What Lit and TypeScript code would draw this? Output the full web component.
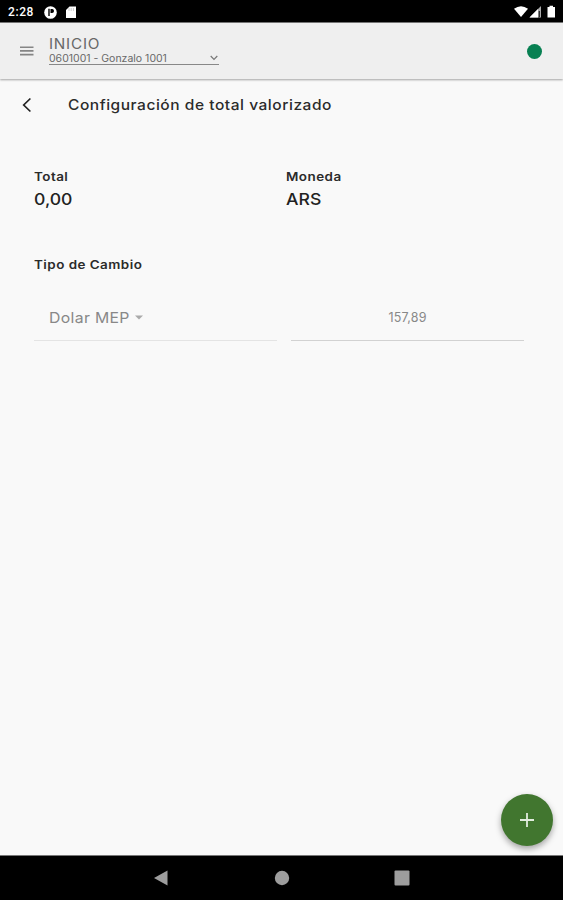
import { LitElement, html, css } from "lit";
import { customElement } from "lit/decorators.js";

@customElement("app-root")
export class AppRoot extends LitElement {
  static styles = css`
    :host {
      display: flex;
      flex-direction: column;
      height: 900px;
      background: #f9f9f9;
      color: #2b2b2b;
      font-family: Inter, "Noto Sans", sans-serif;
      overflow: hidden;
      white-space: nowrap;
    }
    * { box-sizing: border-box; }
    svg { display: block; flex: none; }
    .status {
      flex: none;
      height: 23px;
      background: #000;
      border-bottom: 1px solid #777;
      display: flex;
      align-items: center;
      padding: 2px 7px 0 8px;
    }
    .clock {
      width: 36px;
      color: #fff;
      font: 500 12px/16px Roboto, sans-serif;
      letter-spacing: 0.6px;
    }
    .spacer { flex: 1; }
    .header {
      flex: none;
      height: 56px;
      background: #efefef;
      box-shadow: 0 1px 2px rgba(0, 0, 0, 0.35);
      display: flex;
      padding: 0 20px;
      z-index: 1;
    }
    .menu { margin-top: 23px; }
    .account { width: 170px; margin: 12px 0 0 15px; color: #686868; }
    .brand { font-size: 14px; line-height: 18px; letter-spacing: 0.7px; height: 17px; transform: scaleX(1.09); transform-origin: 0 50%; }
    .select {
      display: flex;
      height: 13px;
      justify-content: space-between;
      align-items: center;
      border-bottom: 1px solid #888;
      font-size: 10px;
      line-height: 10px;
    }
    .select span { transform: scaleX(1.05); transform-origin: 0 50%; }
    .dot { width: 15px; height: 15px; border-radius: 50%; background: #078052; margin: 21px 1px 0 0; }
    .page { flex: 1; display: flex; flex-direction: column; }
    .title { display: flex; align-items: center; height: 52px; padding-left: 22px; }
    .title h1 {
      margin: 0 0 0 36px;
      font-size: 14.5px;
      font-weight: 500;
      letter-spacing: 0.5px;
      line-height: 20px;
      transform: scaleX(1.07);
      transform-origin: 0 50%;
    }
    .summary { display: grid; grid-template-columns: 252px 1fr; padding: 38px 34px 0; height: 126px; }
    .label {
      font-size: 11.7px;
      font-weight: 600;
      line-height: 16px;
      letter-spacing: 0.4px;
      transform: scaleX(1.15);
      transform-origin: 0 50%;
    }
    .value {
      font-size: 16px;
      font-weight: 500;
      line-height: 24px;
      margin-top: 2px;
      color: #222;
      transform: scaleX(1.1);
      transform-origin: 0 50%;
    }
    .rate { padding-left: 34px; }
    .fields { display: flex; gap: 14px; margin-top: 19px; color: #888; }
    .field { height: 49px; border-bottom: 1px solid #e4e4e4; display: flex; align-items: center; }
    .kind { width: 243px; padding: 3px 0 0 15px; gap: 12px; font-size: 14.5px; letter-spacing: 0.3px; }
    .kind span { transform: scaleX(1.09); transform-origin: 0 50%; }
    .amount { width: 233px; justify-content: center; padding-top: 3px; border-color: #d2d2d2; font-size: 12.5px; letter-spacing: 0.2px; }
    .fab {
      width: 52px;
      height: 52px;
      border-radius: 50%;
      background: #41762f;
      margin: auto 10px 9px auto;
      display: flex;
      align-items: center;
      justify-content: center;
      box-shadow: 0 3px 6px rgba(0, 0, 0, 0.35);
    }
    .nav {
      flex: none;
      height: 45px;
      background: #000;
      border-top: 1px solid #777;
      display: flex;
      align-items: center;
      justify-content: center;
      gap: 104.5px;
    }
  `;

  render() {
    return html`
      <div class="status">
        <span class="clock">2:28</span>
        <svg width="13" height="13" viewBox="0 0 13 13">
          <circle cx="6.5" cy="6.5" r="6.3" fill="#fff" />
          <path d="M5 2.8v7.2M7.2 3.6h.8a1.2 1.2 0 0 1 0 2.6h-.8z" fill="#000" stroke="#000" stroke-width="1.4" />
        </svg>
        <svg width="34" height="13" viewBox="0 0 34 13">
          <path d="M12.5 0.5H19V12H9V4z" fill="#fff" />
          <path d="M12 2v3M14.2 2v3M16.4 2v3" stroke="#999" stroke-width=".5" />
        </svg>
        <span class="spacer"></span>
        <svg width="43" height="14" viewBox="0 0 43 14">
          <path d="M1 3.8Q8 -1.5 15 3.8L8 12z" fill="#fff" />
          <path d="M28 1V12.5H16.5z" fill="#aaa" />
          <path d="M25 4V12.5H16.5z" fill="#fff" />
          <path d="M26.3 6v6" stroke="#222" stroke-width="1.2" />
          <path d="M34.5 2h2V.8h3.5V2h2v10.5h-7.5z" fill="#fff" />
        </svg>
      </div>
      <div class="header">
        <svg class="menu" width="14" height="10" viewBox="0 0 14 10">
          <path d="M0 1.2H13.5M0 4.9H13.5M0 8.6H13.5" stroke="#858585" stroke-width="1.6" />
        </svg>
        <div class="account">
          <div class="brand">INICIO</div>
          <div class="select">
            <span>0601001 - Gonzalo 1001</span>
            <svg width="10" height="6" viewBox="0 0 10 6">
              <path d="M1.7 1L5 4.3L8.3 1" fill="none" stroke="#777" stroke-width="1.2" />
            </svg>
          </div>
        </div>
        <span class="spacer"></span>
        <span class="dot"></span>
      </div>
      <div class="page">
        <div class="title">
          <svg width="10" height="16" viewBox="0 0 10 16">
            <path d="M8.4 1.5L1.7 8L8.4 14.5" fill="none" stroke="#222" stroke-width="1.7" />
          </svg>
          <h1>Configuración de total valorizado</h1>
        </div>
        <div class="summary">
          <div><div class="label">Total</div><div class="value">0,00</div></div>
          <div><div class="label">Moneda</div><div class="value">ARS</div></div>
        </div>
        <div class="rate">
          <div class="label">Tipo de Cambio</div>
          <div class="fields">
            <div class="field kind">
              <span>Dolar MEP</span>
              <svg width="8" height="5" viewBox="0 0 8 5"><path d="M0 .5H8L4 4.5z" fill="#aaa" /></svg>
            </div>
            <div class="field amount">157,89</div>
          </div>
        </div>
        <div class="fab">
          <svg width="14" height="14" viewBox="0 0 14 14">
            <path d="M0 7H14M7 0V14" stroke="#e2eddf" stroke-width="1.8" />
          </svg>
        </div>
      </div>
      <div class="nav">
        <svg width="16" height="16" viewBox="0 0 16 16"><path d="M1 8L14.5 .5V15.5z" fill="#9d9d9d" /></svg>
        <svg width="16" height="16" viewBox="0 0 16 16"><circle cx="8" cy="8" r="7.2" fill="#9d9d9d" /></svg>
        <svg width="16" height="16" viewBox="0 0 16 16"><rect x=".5" y=".5" width="15" height="15" rx="1" fill="#9d9d9d" /></svg>
      </div>
    `;
  }
}
